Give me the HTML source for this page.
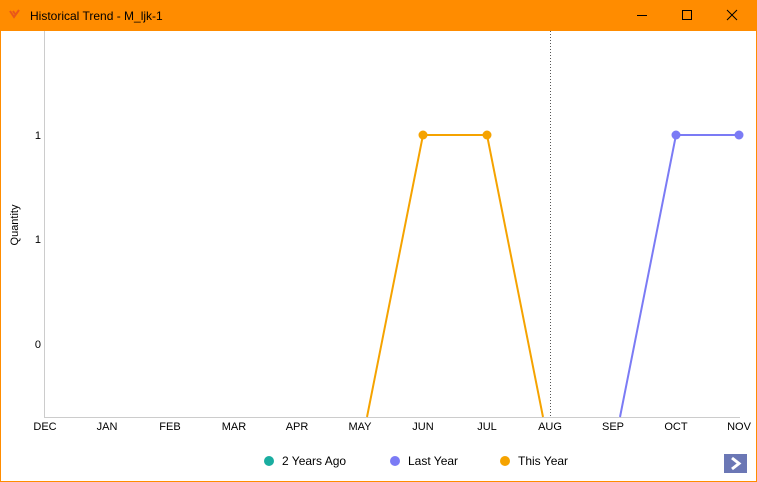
<html><body style="margin:0;width:757px;height:482px;overflow:hidden;font-family:'Liberation Sans',sans-serif;">
<div style="position:absolute;left:0;top:0;width:755px;height:480px;border:1px solid #ff8c00;background:#fff"></div>
<div style="position:absolute;left:0;top:0;width:757px;height:31px;background:#ff8c00"></div>
<svg width="757" height="482" style="position:absolute;left:0;top:0" font-family="Liberation Sans, sans-serif">
<path d="M10 11 L14 17 L19 10 M13 11 L15 14" stroke="#e9581a" stroke-width="2" fill="none"/>
<text x="30" y="20" font-size="12" fill="#000">Historical Trend - M_ljk-1</text>
<line x1="637" y1="15.5" x2="647" y2="15.5" stroke="#000"/>
<rect x="682.5" y="10.5" width="9" height="9" fill="none" stroke="#000"/>
<path d="M727 10 L737 20 M737 10 L727 20" stroke="#000"/>
<line x1="44.5" y1="31" x2="44.5" y2="417" stroke="#ccc"/>
<line x1="44" y1="417.5" x2="740" y2="417.5" stroke="#ccc"/>
<line x1="550.5" y1="31" x2="550.5" y2="417" stroke="#555" stroke-dasharray="1,2"/>
<g font-size="11" text-anchor="end"><text x="41" y="139">1</text><text x="41" y="243">1</text><text x="41" y="348">0</text></g>
<text transform="translate(18,225) rotate(-90)" font-size="11" text-anchor="middle">Quantity</text>
<g font-size="11" text-anchor="middle">
<text x="45" y="430">DEC</text><text x="107" y="430">JAN</text><text x="170" y="430">FEB</text><text x="234" y="430">MAR</text><text x="297" y="430">APR</text><text x="360" y="430">MAY</text><text x="423" y="430">JUN</text><text x="487" y="430">JUL</text><text x="550" y="430">AUG</text><text x="613" y="430">SEP</text><text x="676" y="430">OCT</text><text x="739" y="430">NOV</text></g>
<polyline points="367,417 423,135 487,135 543,417" fill="none" stroke="#f5a300" stroke-width="2"/>
<circle cx="423" cy="135" r="4.5" fill="#f5a300"/><circle cx="487" cy="135" r="4.5" fill="#f5a300"/>
<polyline points="620,417 676,135 739,135" fill="none" stroke="#7b7bf5" stroke-width="2"/>
<circle cx="676" cy="135" r="4.5" fill="#7b7bf5"/><circle cx="739" cy="135" r="4.5" fill="#7b7bf5"/>
<g font-size="12">
<circle cx="269" cy="461" r="5" fill="#1aada0"/><text x="282" y="465">2 Years Ago</text>
<circle cx="395" cy="461" r="5" fill="#7b7bf5"/><text x="408" y="465">Last Year</text>
<circle cx="505" cy="461" r="5" fill="#f5a300"/><text x="518" y="465">This Year</text></g>
<rect x="724" y="454" width="23" height="19" fill="#6b77b5"/>
<path d="M732 458 L739 463.5 L732 469" stroke="#fff" stroke-width="3" fill="none"/>
</svg>
</body></html>
